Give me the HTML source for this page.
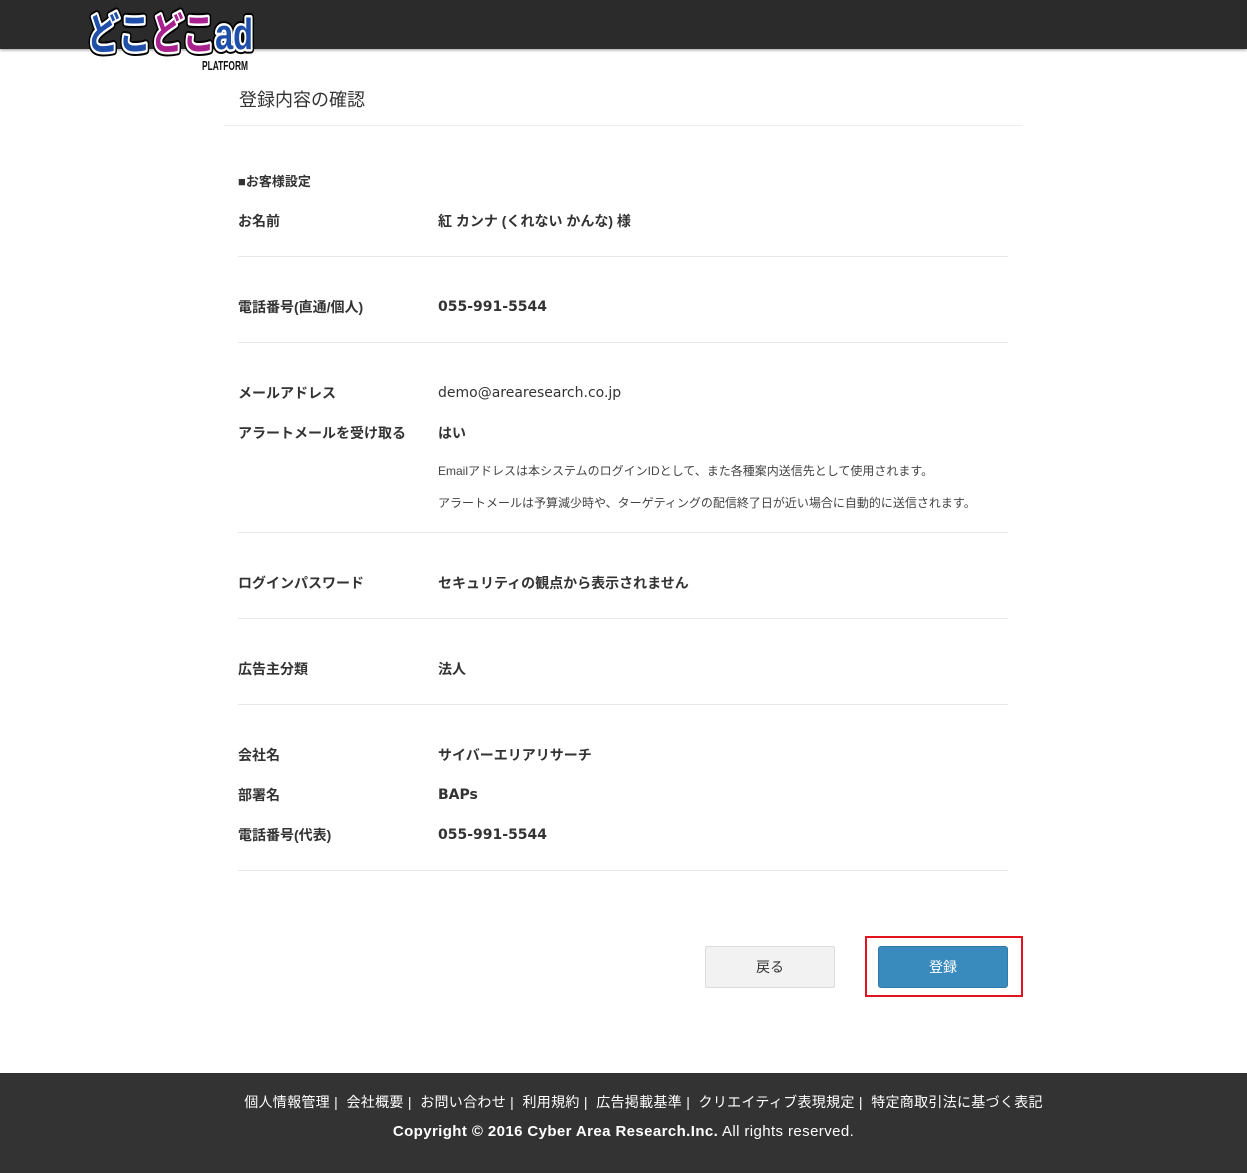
<!DOCTYPE html>
<html><head><meta charset="utf-8">
<style>
*{margin:0;padding:0;box-sizing:border-box}
body{width:1247px;height:1173px;position:relative;background:#fff;font-family:"Liberation Sans","Noto Sans CJK JP",sans-serif;color:#333;overflow:hidden}
.hdr{position:absolute;left:0;top:0;width:1247px;height:49px;background:#2b2b2b;box-shadow:0 1px 3px rgba(0,0,0,.4)}
.logo{position:absolute;left:84px;top:0;width:176px;height:76px}
.t{position:absolute;white-space:nowrap}
.title{left:239px;top:86px;font-size:18px;color:#333}
.hl{position:absolute;left:224px;top:125px;width:799px;height:1px;background:#eee}
.sep{position:absolute;left:238px;width:770px;height:1px;background:#e8e8e8}
.lb{left:238px;font-size:14px;font-weight:bold;color:#333}
.vl{left:438px;font-size:14px;font-weight:bold;color:#333;font-family:"DejaVu Sans","Noto Sans CJK JP",sans-serif;margin-top:2px}
.vl.j{font-family:"Liberation Sans","Noto Sans CJK JP",sans-serif;margin-top:0}
.note{left:438px;font-size:12px;color:#444}
.btn1{position:absolute;left:705px;top:946px;width:130px;height:42px;background:#f2f2f2;border:1px solid #ddd;border-radius:2px;text-align:center;line-height:40px;font-size:14px;color:#333}
.btn2{position:absolute;left:878px;top:946px;width:130px;height:42px;background:#3a8bbd;border:1px solid #2f7aa8;border-radius:3px;text-align:center;line-height:40px;font-size:14px;color:#fff}
.red{position:absolute;left:865px;top:936px;width:158px;height:61px;border:2px solid #e3141e}
.ftr{position:absolute;left:0;top:1073px;width:1247px;height:100px;background:#333;color:#fff;text-align:center}
.links{position:absolute;top:19px;left:0;width:1247px;padding-left:40px;font-size:14px;color:#fff;letter-spacing:0.3px}
.copy{position:absolute;top:50px;left:0;width:1247px;font-size:15px;color:#fff;letter-spacing:0.4px}
</style></head><body>
<div class="hdr"></div>
<svg class="logo" viewBox="0 0 176 76" xmlns="http://www.w3.org/2000/svg">
 <g font-family="Liberation Sans, Noto Sans CJK JP, sans-serif" font-weight="bold" font-size="44">
  <text x="3" y="49" textLength="166" lengthAdjust="spacingAndGlyphs" stroke="#000" stroke-width="9" stroke-linejoin="round" fill="#000">どこどこad</text>
  <text x="3" y="49" textLength="166" lengthAdjust="spacingAndGlyphs" stroke="#fff" stroke-width="5" stroke-linejoin="round" fill="#fff">どこどこad</text>
  <text x="3" y="49" textLength="166" lengthAdjust="spacingAndGlyphs"><tspan fill="#1f4fa8">どこ</tspan><tspan fill="#a8218f">どこ</tspan><tspan fill="#1f4fa8">ad</tspan></text>
 </g>
 <text x="118" y="70" font-family="Liberation Sans, sans-serif" font-weight="bold" font-size="13" textLength="46" lengthAdjust="spacingAndGlyphs" fill="#111">PLATFORM</text>
</svg>

<div class="t title">登録内容の確認</div>
<div class="hl"></div>

<div class="t lb" style="top:171px;font-size:13px">■お客様設定</div>
<div class="t lb" style="top:211px">お名前</div>
<div class="t vl j" style="top:211px">紅 カンナ (くれない かんな) 様</div>
<div class="sep" style="top:256px"></div>

<div class="t lb" style="top:297px">電話番号(直通/個人)</div>
<div class="t vl" style="top:297px">055-991-5544</div>
<div class="sep" style="top:342px"></div>

<div class="t lb" style="top:383px">メールアドレス</div>
<div class="t vl" style="top:383px;font-weight:normal">demo@arearesearch.co.jp</div>
<div class="t lb" style="top:423px">アラートメールを受け取る</div>
<div class="t vl j" style="top:423px">はい</div>
<div class="t note" style="top:462px">Emailアドレスは本システムのログインIDとして、また各種案内送信先として使用されます。</div>
<div class="t note" style="top:494px">アラートメールは予算減少時や、ターゲティングの配信終了日が近い場合に自動的に送信されます。</div>
<div class="sep" style="top:532px"></div>

<div class="t lb" style="top:573px">ログインパスワード</div>
<div class="t vl j" style="top:573px">セキュリティの観点から表示されません</div>
<div class="sep" style="top:618px"></div>

<div class="t lb" style="top:659px">広告主分類</div>
<div class="t vl j" style="top:659px">法人</div>
<div class="sep" style="top:704px"></div>

<div class="t lb" style="top:745px">会社名</div>
<div class="t vl j" style="top:745px">サイバーエリアリサーチ</div>
<div class="t lb" style="top:785px">部署名</div>
<div class="t vl" style="top:785px">BAPs</div>
<div class="t lb" style="top:825px">電話番号(代表)</div>
<div class="t vl" style="top:825px">055-991-5544</div>
<div class="sep" style="top:870px"></div>

<div class="btn1">戻る</div>
<div class="red"></div>
<div class="btn2">登録</div>

<div class="ftr">
<div class="links">個人情報管理 | &nbsp;会社概要 | &nbsp;お問い合わせ | &nbsp;利用規約 | &nbsp;広告掲載基準 | &nbsp;クリエイティブ表現規定 | &nbsp;特定商取引法に基づく表記</div>
<div class="copy"><b>Copyright © 2016 Cyber Area Research.Inc.</b> All rights reserved.</div>
</div>
</body></html>
